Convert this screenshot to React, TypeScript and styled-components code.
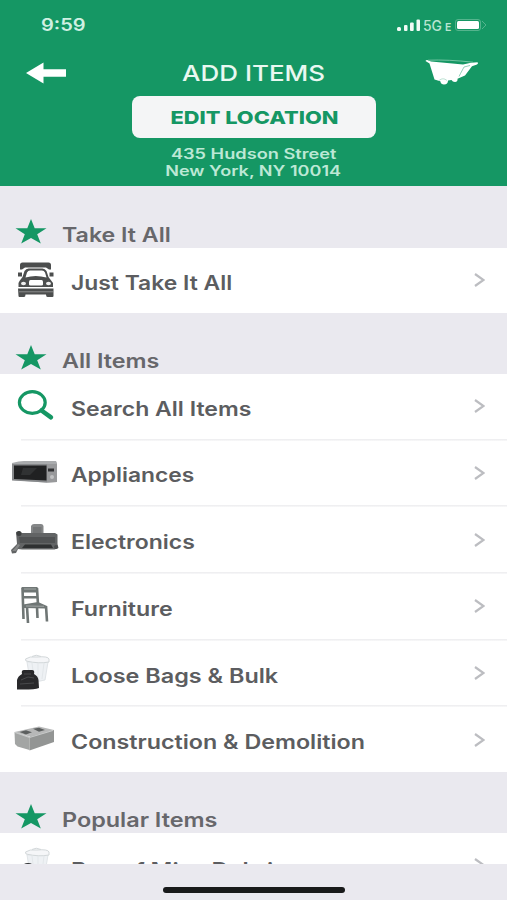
import React from 'react';
import styled, { createGlobalStyle } from 'styled-components';

const GREEN = '#159764';

const GlobalStyle = createGlobalStyle`
  * { box-sizing: border-box; }
  body { margin: 0; background: #eae9ef; font-family: Inter, "Liberation Sans", sans-serif; }
  svg { display: block; }
`;

const Screen = styled.div`
  width: 507px;
  height: 900px;
  display: flex;
  flex-direction: column;
  overflow: hidden;
  background: #eae9ef;
`;

const Header = styled.header`
  height: 186px;
  flex: none;
  background: ${GREEN};
  color: #e9f8f1;
  display: flex;
  flex-direction: column;
  align-items: center;
`;

const StatusBar = styled.div`
  width: 100%;
  height: 50px;
  padding: 0 20px 0 41px;
  display: flex;
  align-items: center;
  justify-content: space-between;
`;

const Stretch = styled.span<{ $x: number; $center?: boolean }>`
  display: inline-block;
  white-space: nowrap;
  transform: scaleX(${p => p.$x});
  transform-origin: ${p => (p.$center ? 'center' : 'left')};
`;

const Clock = styled.div`
  font-size: 17px;
  font-weight: 600;
  color: #d0f0e2;
`;

const TitleBar = styled.div`
  width: 100%;
  height: 46px;
  padding: 0 28px 0 26px;
  display: grid;
  grid-template-columns: 54px 1fr 54px;
  align-items: center;
`;

const Title = styled.h1`
  margin: 0;
  padding-left: 2px;
  text-align: center;
  font-size: 22px;
  font-weight: 500;
  line-height: 46px;
`;

const EditButton = styled.button`
  width: 244px;
  height: 42px;
  flex: none;
  padding: 0 0 0 2px;
  border: 0;
  border-radius: 8px;
  background: #f4f5f6;
  color: ${GREEN};
  font: 800 18px Inter, sans-serif;
`;

const Address = styled.div`
  margin-top: 7px;
  text-align: center;
  font-size: 14px;
  line-height: 17px;
  font-weight: 600;
  color: #bce8d5;
`;

const SectionHead = styled.h2<{ $height: number }>`
  height: ${p => p.$height}px;
  flex: none;
  margin: 0;
  padding: 0 0 1px 15px;
  display: flex;
  align-items: flex-end;
  gap: 15px;
  color: #67676b;
  font-size: 19.5px;
  font-weight: 600;
  line-height: 24px;

  svg { margin-bottom: 1px; }
`;

const List = styled.div<{ $height: number }>`
  height: ${p => p.$height}px;
  flex: none;
  overflow: hidden;
  background: #fff;
`;

const Row = styled.div<{ $first?: boolean }>`
  height: ${p => (p.$first ? 64.6 : 66.7)}px;
  padding: ${p => (p.$first ? 0 : 2)}px 22px 0 10px;
  display: grid;
  grid-template-columns: 61px 1fr 11px;
  align-items: center;
  background: ${p => (p.$first ? 'none' : 'linear-gradient(#efeff1, #efeff1) 21px 0 / 100% 1.6px no-repeat')};
`;

const RowText = styled.div<{ $drop?: number }>`
  padding-top: ${p => 5 + (p.$drop ?? 0)}px;
  color: #5c5d60;
  font-size: 19.5px;
  font-weight: 600;
  line-height: 24px;
`;

const Footer = styled.footer`
  flex: 1;
  display: flex;
  justify-content: center;
  align-items: flex-start;
  padding-top: 23px;
`;

const HomeIndicator = styled.div`
  width: 182px;
  height: 6px;
  border-radius: 3px;
  background: #191a1b;
`;

const Star = () => (
  <svg width="32" height="28" viewBox="0 0 32 28">
    <path fill={GREEN} d="M16 1l3.700 9.300H31.500L22.200 16.200 25.800 25.500 16 19.900 6.200 25.500 9.800 16.200.500 10.300h11.800z" />
  </svg>
);

const Chevron = () => (
  <svg width="11" height="16" viewBox="0 0 11 16" fill="none" stroke="#bcbdc1" strokeWidth="2.200">
    <path d="M1 2l8.500 6L1 14" />
  </svg>
);

const StatusIcons = () => (
  <svg width="92" height="18" viewBox="0 0 92 18" fill="#f2fbf6">
    <rect x="2" y="11" width="4" height="4" rx="1.500" />
    <rect x="9" y="9" width="3.500" height="6" rx="1" />
    <rect x="15" y="6.500" width="3.700" height="8.500" rx="1" />
    <rect x="21.500" y="3.500" width="3.500" height="11.500" rx="1" />
    <text x="28" y="14.500" fontSize="14" fontWeight="500" fill="#b9e5d1" textLength="19" lengthAdjust="spacingAndGlyphs">5G</text>
    <text x="50" y="14.500" fontSize="10.500" fontWeight="600" fill="#b9e5d1">E</text>
    <rect x="60.500" y="3.500" width="25" height="11" rx="2.500" fill="none" stroke="#54b48d" />
    <path d="M87 5l4 4-4 4" fill="none" stroke="#54b48d" />
    <rect x="62" y="5" width="22" height="8" rx="1.500" fill="#fff" />
  </svg>
);

const BackArrow = () => (
  <svg width="40" height="22" viewBox="0 0 40 22">
    <path fill="#fff" d="M0 11L17.500.500v6.800H40v7.500H17.500v6.700z" />
  </svg>
);

const Barrow = () => (
  <svg width="54" height="28" viewBox="0 0 54 28">
    <path fill="#fff" d="M.500 2Q1 .700 3 1.200L6 2.500l32 3 8-1.800 6.500-.5q1.500 1-.5 2.300l-5 1.700-7 9.300-7.500 3.300q.500 3-2.500 3.200-2.500 0-3.500-2l-3.500.500q0 4-4 4-3 0-3.700-3.200L9.500 20.500 4.500 4.500z" />
    <path d="M3 1.200q20-.8 45 2" stroke="#7cc8a8" strokeWidth=".9" fill="none" />
    <path d="M45 6.500l-6 1.500-3.500 6.500-1.500 3" stroke={GREEN} strokeWidth=".9" fill="none" opacity=".5" />
    <path d="M14 21.500q4-3.500 8 0" stroke={GREEN} strokeWidth=".7" fill="none" opacity=".4" />
  </svg>
);

const Truck = () => (
  <svg width="52" height="36" viewBox="0 0 52 36">
    <path fill="#4c4e4e" d="M10 3q0-2.500 2.500-2.500h26q2.500 0 2.500 2.500v4.500h-2l-3-2H15l-3 2h-2z" />
    <path fill="#4c4e4e" d="M8 10.500h4v4H8zM39.500 10.500h4v4h-4zM9.500 19l3-4 2-6q1.500-2.500 4-2.500h14q2.500 0 4 2.500l2 6 3 4 1.500 2v4H8.500v-4z" />
    <path fill="#fff" d="M15.500 15.500l1.500-5q1-2 3-2h12q2 0 3 2l1.500 5q-11-3-21 0z" />
    <path fill="#fff" d="M20.500 18h11q1.500 0 1.500 2v2.500q0 1-1.500 1h-11q-1.500 0-1.500-1V20q0-2 1.500-2z" />
    <ellipse cx="13.500" cy="21.500" rx="2.500" ry="1.700" fill="#efefef" />
    <ellipse cx="38.500" cy="21.500" rx="2.500" ry="1.700" fill="#efefef" />
    <path fill="#4c4e4e" d="M8 26.500h35.500V34q0 1-1 1h-5q-1.500 0-1.500-2.500H15.500q0 2.500-1.500 2.500H9.500q-1 0-1-1z" />
    <path stroke="#8c8e8e" d="M9 29.800h34" strokeWidth="1" />
  </svg>
);

const SearchIcon = () => (
  <svg width="52" height="34" viewBox="0 0 52 34" fill="none" stroke={GREEN}>
    <ellipse cx="22.300" cy="13.500" rx="12.900" ry="10.800" strokeWidth="3.200" />
    <path d="M31.500 21.500l9.500 6.800" strokeWidth="4.500" strokeLinecap="round" />
  </svg>
);

const Microwave = () => (
  <svg width="52" height="24" viewBox="0 0 52 24">
    <path fill="#a9abad" d="M2 3Q9 1 14 1h32l1 2v19l-10 .7L2 20z" />
    <path fill="#87898b" d="M2 4h35v18.500L2 20.500z" />
    <path fill="#202122" d="M4 5.500h32.500v15L4 19z" />
    <path fill="#505253" d="M13 8h14l-7 7h-9z" opacity=".35" />
    <path fill="#98999b" d="M37 4h10v18l-10 .5z" />
    <path fill="#303133" d="M38 8.500h6v3h-6z" />
    <circle cx="42" cy="17" r="2" fill="#c0c1c2" />
  </svg>
);

const Machine = () => (
  <svg width="52" height="32" viewBox="0 0 52 32">
    <path fill="#858788" d="M21 3q1-2 3-2h7q2 0 2.500 2v9H21z" />
    <path fill="#747677" d="M23 4h8.500v8H23z" />
    <path fill="#626465" d="M6 9l3-1 3 2h33l2.500 1.500V21l1 4-4 1.500H12L8 26l-2 4-4 .500L1 27l6-6z" />
    <path fill="#505253" d="M9 14h36v6H10z" />
    <path fill="#2e3031" d="M15 21.500h26l2 3.500H12z" />
    <path fill="#858787" d="M5 25l3-4 2 1-4 6H2z" />
    <circle cx="9" cy="10.500" r="2.500" fill="#3e4041" />
    <circle cx="46" cy="24" r="2" fill="#4a4c4d" />
  </svg>
);

const Chair = () => (
  <svg width="52" height="39" viewBox="0 0 52 39">
    <path fill="none" stroke="#6f7675" strokeWidth="2.600" d="M12.500 2l1 31M27 2l1 17M17 21l1 16M36 20l1 15.500M27 21l.5 11" />
    <path fill="#6f7675" d="M11.500 1h16v5.500H12.500zM13 10h14.500v2.500H13zM13 18.500l15-2.500 9 4-1 2.500-22-.5z" />
    <path fill="none" stroke="#a2a7a6" d="M14 3h12M16 20l18 .3" />
  </svg>
);

const Bin = () => (
  <g>
    <path fill="#eef1f4" stroke="#e0e4e7" d="M17 8q10-2 21 0l-3 18q-8 3-15 0z" />
    <path fill="#f5f6f8" stroke="#d3d8da" d="M15.500 5q4-3 11.500-2 11-1 12 2v3q-10 2-23-1zM22 2.500q4-2.500 9 0" />
    <path stroke="#e3e7ea" fill="none" d="M22 9l2 16M28 9v17M34 9l-2 16" />
  </g>
);

const Bags = () => (
  <svg width="52" height="37" viewBox="0 0 52 37">
    <Bin />
    <path fill="#29292b" d="M7 26q1-4 5-6-1-4 2-4h8q3 0 2 4 4 2 4.500 6l.5 8q-5 2-22 1.500Z" />
    <path stroke="#48494b" fill="none" d="M11 26l7-3 6 1M10 30l14-1M14 20h7" />
  </svg>
);

const Block = () => (
  <svg width="52" height="28" viewBox="0 0 52 28">
    <path fill="#b7b8b8" d="M4.500 8L29 2.500l15 3.500-23 7z" />
    <path fill="#a3a5a4" d="M4.500 8l15 5v13L7.500 22.500 5 20z" />
    <path fill="#939594" d="M19.500 13L44 6v12l-24.500 8.500z" />
    <path fill="#5c5f5f" d="M9.500 8l6.500-1.700 6 2-6 2.200zM23 4.800l6-1 6 2.200-6 1.700z" />
    <path stroke="#c8caca" fill="none" d="M5 8.500l14.500 5L43 6.500" />
  </svg>
);

const PeekingBag = () => (
  <svg width="52" height="37" viewBox="0 0 52 37">
    <Bin />
    <ellipse cx="18" cy="20" rx="6" ry="4" fill="#303233" />
  </svg>
);

const IconCell = styled.div<{ $shift?: number }>`
  margin-top: ${p => p.$shift ?? 0}px;
`;

interface Item {
  label: string;
  stretch: number;
  icon: React.ReactNode;
  shift?: number;
  drop?: number;
}

const takeAll: Item[] = [{ label: 'Just Take It All', stretch: 1.173, icon: <Truck /> }];
const allItems: Item[] = [
  { label: 'Search All Items', stretch: 1.182, icon: <SearchIcon />, shift: 0 },
  { label: 'Appliances', stretch: 1.17, icon: <Microwave />, shift: -1 },
  { label: 'Electronics', stretch: 1.18, icon: <Machine />, shift: -2 },
  { label: 'Furniture', stretch: 1.19, icon: <Chair />, shift: -2 },
  { label: 'Loose Bags & Bulk', stretch: 1.2, icon: <Bags />, shift: -2 },
  { label: 'Construction & Demolition', stretch: 1.193, icon: <Block />, shift: -3 },
];
const popular: Item[] = [{ label: 'Bag of Misc Debris', stretch: 1.215, icon: <PeekingBag />, shift: 0, drop: 4 }];

const Rows = ({ items, height }: { items: Item[]; height: number }) => (
  <List $height={height}>
    {items.map((it, i) => (
      <Row key={it.label} $first={i === 0}>
        <IconCell $shift={it.shift}>{it.icon}</IconCell>
        <RowText $drop={it.drop}><Stretch $x={it.stretch}>{it.label}</Stretch></RowText>
        <Chevron />
      </Row>
    ))}
  </List>
);

const Section = ({ title, stretch, height }: { title: string; stretch: number; height: number }) => (
  <SectionHead $height={height}>
    <Star />
    <Stretch $x={stretch}>{title}</Stretch>
  </SectionHead>
);

export default function App() {
  return (
    <>
      <GlobalStyle />
      <Screen>
        <Header>
          <StatusBar>
            <Clock><Stretch $x={1.18}>9:59</Stretch></Clock>
            <StatusIcons />
          </StatusBar>
          <TitleBar>
            <BackArrow />
            <Title><Stretch $x={1.18} $center>ADD ITEMS</Stretch></Title>
            <Barrow />
          </TitleBar>
          <EditButton><Stretch $x={1.21} $center>EDIT LOCATION</Stretch></EditButton>
          <Address>
            <Stretch $x={1.3} $center>435 Hudson Street</Stretch><br />
            <Stretch $x={1.29} $center>New York, NY 10014</Stretch>
          </Address>
        </Header>
        <Section title="Take It All" stretch={1.187} height={62} />
        <Rows items={takeAll} height={65} />
        <Section title="All Items" stretch={1.195} height={61} />
        <Rows items={allItems} height={398} />
        <Section title="Popular Items" stretch={1.2} height={61} />
        <Rows items={popular} height={31} />
        <Footer><HomeIndicator /></Footer>
      </Screen>
    </>
  );
}
